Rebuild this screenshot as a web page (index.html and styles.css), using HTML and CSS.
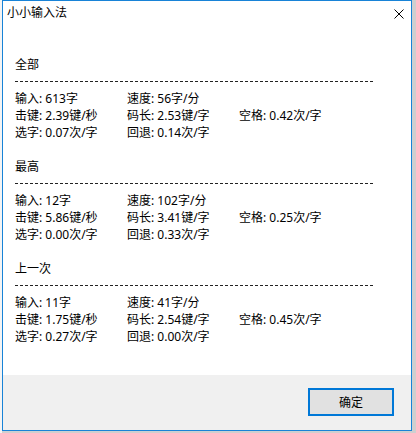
FILE: index.html
```html
<!DOCTYPE html>
<html lang="zh-CN">
<head>
<meta charset="utf-8">
<title>小小输入法</title>
<link rel="stylesheet" href="styles.css">
</head>
<body>
<div class="window">
  <div class="titlebar">
    <span class="title">小小输入法</span>
    <svg class="close" width="10" height="10" viewBox="0 0 10 10"><path d="M0.5 0.5 L9.5 9.5 M9.5 0.5 L0.5 9.5" stroke="#000" stroke-width="1" fill="none"/></svg>
  </div>
  <div class="content">
    <section class="group">
      <div class="line">全部</div>
      <div class="line dashline"><span class="dash"></span></div>
      <div class="line row"><span>输入: 613字</span><span>速度: 56字/分</span></div>
      <div class="line row"><span>击键: 2.39键/秒</span><span>码长: 2.53键/字</span><span>空格: 0.42次/字</span></div>
      <div class="line row"><span>选字: 0.07次/字</span><span>回退: 0.14次/字</span></div>
    </section>
    <section class="group">
      <div class="line">最高</div>
      <div class="line dashline"><span class="dash"></span></div>
      <div class="line row"><span>输入: 12字</span><span>速度: 102字/分</span></div>
      <div class="line row"><span>击键: 5.86键/秒</span><span>码长: 3.41键/字</span><span>空格: 0.25次/字</span></div>
      <div class="line row"><span>选字: 0.00次/字</span><span>回退: 0.33次/字</span></div>
    </section>
    <section class="group">
      <div class="line">上一次</div>
      <div class="line dashline"><span class="dash"></span></div>
      <div class="line row"><span>输入: 11字</span><span>速度: 41字/分</span></div>
      <div class="line row"><span>击键: 1.75键/秒</span><span>码长: 2.54键/字</span><span>空格: 0.45次/字</span></div>
      <div class="line row"><span>选字: 0.27次/字</span><span>回退: 0.00次/字</span></div>
    </section>
  </div>
  <div class="footer">
    <button class="ok">确定</button>
  </div>
</div>
</body>
</html>
```

FILE: styles.css
```css
html, body {
  margin: 0;
  padding: 0;
}
body {
  width: 416px;
  height: 433px;
  overflow: hidden;
  background: linear-gradient(to right, #f4f4f4 2px, #cfcfcf 2px);
  font-family: "Noto Sans", "Noto Sans CJK SC", sans-serif;
  font-size: 12px;
  color: #000;
}
.window {
  box-sizing: border-box;
  margin-left: 2px;
  width: 410px;
  height: 431px;
  border: 1px solid #1883d7;
  background: #fff;
  display: flex;
  flex-direction: column;
}
.titlebar {
  height: 24px;
  flex: none;
  display: flex;
  align-items: center;
  justify-content: space-between;
  padding: 0 7px 0 4px;
}
.title {
  line-height: 24px;
  font-size: 12px;
}
.close {
  display: block;
  margin-top: 2px;
}
.content {
  flex: 1;
  padding: 31px 0 0 12px;
}
.line {
  height: 17px;
  line-height: 17px;
  white-space: nowrap;
}
.row {
  display: grid;
  grid-template-columns: 112px 112px 112px;
}
.dashline {
  display: flex;
  align-items: flex-start;
}
.dash {
  display: block;
  margin-top: 8px;
  width: 360px;
  height: 1px;
  background: repeating-linear-gradient(to right, #222 0 3px, transparent 3px 5px);
}
.group {
  height: 102px;
}
.footer {
  flex: none;
  height: 55px;
  background: #f0f0f0;
  display: flex;
  justify-content: flex-end;
  align-items: flex-start;
  padding: 13px 17px 0 0;
  box-sizing: border-box;
}
.ok {
  width: 86px;
  height: 28px;
  box-sizing: border-box;
  border: 2px solid #0078d7;
  background: #e1e1e1;
  font-family: "Noto Sans", "Noto Sans CJK SC", sans-serif;
  font-size: 12px;
  color: #000;
  padding: 0;
}
```
